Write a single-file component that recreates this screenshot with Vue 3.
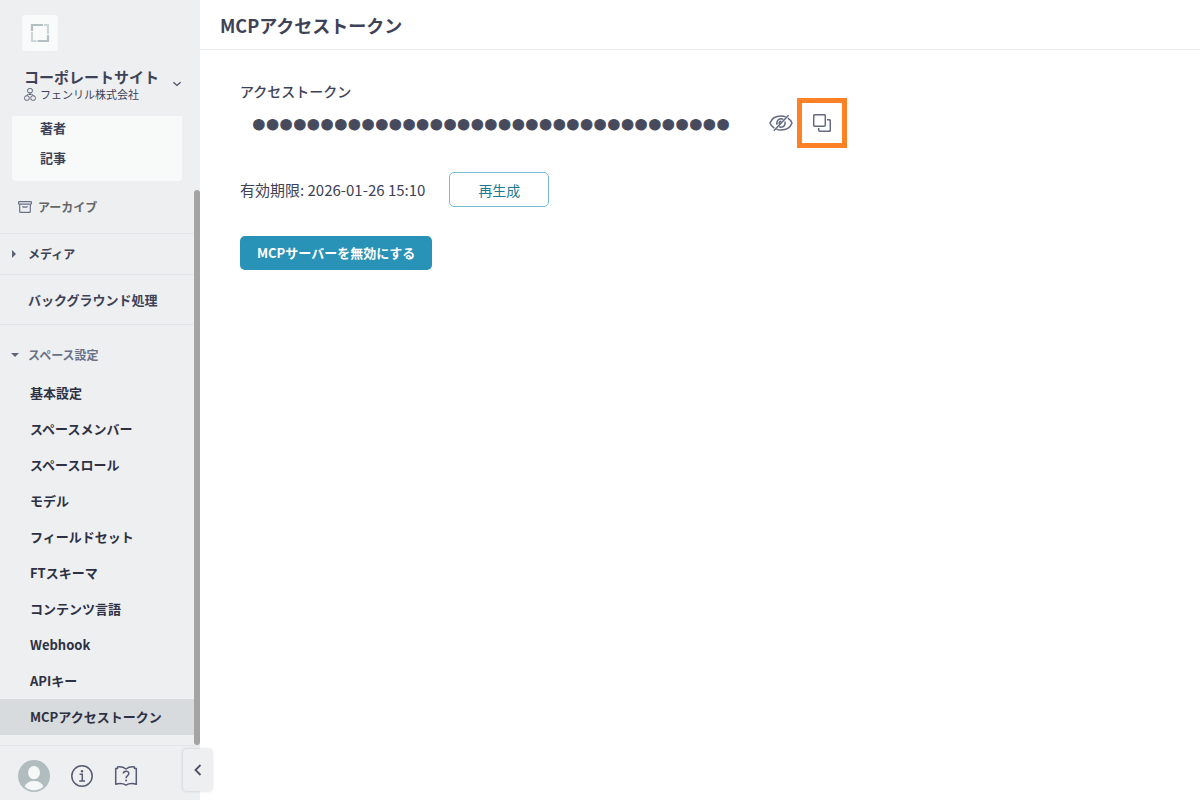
<template>
  <div class="layout">
    <aside class="sidebar">
      <div class="space">
        <a href="#" class="logo" aria-label="ホーム">
          <svg width="20" height="20" viewBox="0 0 20 20" fill="none" stroke-width="2.2">
            <path d="M2 8V2h11M18 12v6H7.5" stroke="#b4bfc2" />
            <path d="M14 2h4v9M2 9v9h4.5" stroke="#cfd6d8" />
          </svg>
        </a>
        <button type="button" class="space-switch">
          <span class="space-text">
            <span class="space-name">コーポレートサイト</span>
            <span class="org">
              <svg width="12" height="13" viewBox="0 0 12 13" fill="none" stroke="#5d6379">
                <rect x="3.6" y="0.6" width="4.8" height="4.2" rx="1.5" />
                <rect x="0.6" y="7.9" width="4.6" height="4.4" rx="1.6" />
                <rect x="6.8" y="7.9" width="4.6" height="4.4" rx="1.6" />
                <path d="M6 4.8v1.6M2.9 7.9q0-1.5 1.5-1.5h3.2q1.5 0 1.5 1.5" />
              </svg>
              フェンリル株式会社
            </span>
          </span>
          <svg width="10" height="6" viewBox="0 0 10 6" fill="none" stroke="#4b5066" stroke-width="1.3">
            <path d="M1.4 1.2 5 4.4l3.6-3.2" />
          </svg>
        </button>
      </div>

      <nav class="nav">
        <div class="models">
          <a v-for="m in models" :key="m" href="#">{{ m }}</a>
        </div>
        <a href="#" class="archive">
          <svg width="14" height="12" viewBox="0 0 14 12" fill="none" stroke="#6a7086" stroke-width="1.2">
            <rect x="0.6" y="0.6" width="12.8" height="2.6" rx="0.6" />
            <path d="M1.7 3.2v7.2q0 1 1 1h8.6q1 0 1-1V3.2M4.8 5v.3q0 .9.9.9h2.6q.9 0 .9-.9V5" />
          </svg>
          アーカイブ
        </a>
        <button type="button" class="row media"><span class="caret right"></span>メディア</button>
        <a href="#" class="row background"><span class="caret"></span>バックグラウンド処理</a>
        <button type="button" class="row group" @click="open = !open">
          <span class="caret" :class="open ? 'down' : 'right'"></span>スペース設定
        </button>
        <ul v-if="open" class="settings">
          <li v-for="item in settings" :key="item">
            <a href="#" :class="{ active: item === current }" @click.prevent="current = item">{{ item }}</a>
          </li>
        </ul>
        <div class="thumb"></div>
      </nav>

      <div class="footer">
        <button type="button" aria-label="アカウント">
          <svg width="32" height="32" viewBox="0 0 32 32">
            <circle cx="16" cy="16" r="16" fill="#b1bcbf" />
            <ellipse cx="16" cy="12.6" rx="6" ry="6.6" fill="#f6f8f8" />
            <path d="M6.6 26.6q2.2-5.6 9.4-5.6t9.4 5.6Q21.5 30.4 16 30.4T6.6 26.6Z" fill="#f6f8f8" />
          </svg>
        </button>
        <button type="button" aria-label="情報">
          <svg width="22" height="22" viewBox="0 0 22 22" fill="none" stroke="#555b73" stroke-width="1.5">
            <circle cx="11" cy="11" r="10.2" />
            <path d="M8.6 9.3h2.7v6.5M8.2 15.9h5.8" />
            <circle cx="11" cy="6.2" r="1.2" fill="#555b73" stroke="none" />
          </svg>
        </button>
        <button type="button" aria-label="ヘルプ">
          <svg width="24" height="22" viewBox="0 0 24 22" fill="none" stroke="#555b73" stroke-width="1.5">
            <path d="M12 4C9.5 1.9 6.5 1.7 3.5 1.9v1.5H1.7v15.8c3.8-1 7.3-.9 10.3.9 3-1.8 6.5-1.900 10.300-.9V3.400h-1.800V1.900C17.500 1.700 14.500 1.900 12 4Z" stroke-linejoin="round" />
            <path d="M9.300 8.600c.1-3.300 5.600-3.300 5.500 0 0 2-2.700 2.100-2.700 4.600" />
            <circle cx="12.1" cy="15.5" r="1" fill="#555b73" stroke="none" />
          </svg>
        </button>
      </div>
      <button type="button" class="collapse" aria-label="サイドバーを閉じる">
        <svg width="8" height="12" viewBox="0 0 8 12" fill="none" stroke="#4b5066" stroke-width="1.8">
          <path d="M6.5 1 1.5 6l5 5" />
        </svg>
      </button>
    </aside>

    <main class="main">
      <header class="header"><h1>MCPアクセストークン</h1></header>
      <section class="content">
        <label for="token">アクセストークン</label>
        <div class="token-row">
          <input id="token" :type="visible ? 'text' : 'password'" :value="token" readonly />
          <button type="button" class="icon-btn" aria-label="表示" @click="visible = !visible">
            <svg width="24" height="18" viewBox="0 0 24 18" fill="none" stroke="#646a80" stroke-width="1.5">
              <path d="M5.3 14.2C3.3 12.9 1.7 11 1 9c1.6-4.3 6-7 11-7 1.7 0 3.2.3 4.6.9M18.8 4.2C20.8 5.4 22.3 7.1 23 9c-1.6 4.3-6 7-11 7-1.7 0-3.2-.3-4.6-.9" />
              <path d="M8.2 10.8C7 7.8 9 4.8 12 4.8q1.2 0 2.2.6M15.9 7.6c1 2.8-1 5.6-3.900 5.600q-1 0-1.900-.5M10.200 9.800q-.4-2.400 2-2.600M4.800 16.800 19.600 1.200" />
            </svg>
          </button>
          <button type="button" class="icon-btn copy" aria-label="コピー">
            <svg width="18" height="18" viewBox="0 0 18 18" fill="none" stroke="#646a80" stroke-width="1.5">
              <rect x="0.7" y="0.7" width="11.6" height="11.6" rx="1.2" />
              <path d="M14 5.7h2.1q1.2 0 1.2 1.2v9.2q0 1.2-1.2 1.2H6.9q-1.2 0-1.2-1.2V14" />
            </svg>
          </button>
        </div>
        <div class="expiry">
          <span>有効期限: 2026-01-26 15:10</span>
          <button type="button" class="outline">再生成</button>
        </div>
        <button type="button" class="primary">MCPサーバーを無効にする</button>
      </section>
    </main>
  </div>
</template>

<script setup>
import { ref } from 'vue'

const open = ref(true)
const visible = ref(false)
const current = ref('MCPアクセストークン')
const token = '4f8a1c0d9b7e4263a5d81f30c6b2e97d04a'

const models = ['著者', '記事']
const settings = [
  '基本設定',
  'スペースメンバー',
  'スペースロール',
  'モデル',
  'フィールドセット',
  'FTスキーマ',
  'コンテンツ言語',
  'Webhook',
  'APIキー',
  'MCPアクセストークン'
]
</script>

<style>
body { margin: 0; background: #fff; }
</style>

<style scoped>
.layout {
  display: flex;
  min-height: 100vh;
  font-family: "Noto Sans CJK JP", sans-serif;
  font-size: 14px;
  line-height: 20px;
  color: #3e4256;
}

a { color: inherit; text-decoration: none; }
button, input { font: inherit; color: inherit; }
button {
  display: flex;
  align-items: center;
  padding: 0;
  border: none;
  background: none;
  cursor: pointer;
}
svg { display: block; flex: none; }

.sidebar {
  position: relative;
  display: flex;
  flex-direction: column;
  flex: none;
  width: 200px;
  background: #edeff1;
}

.space { padding: 15px 18px 15px 24px; }
.logo {
  display: flex;
  align-items: center;
  justify-content: center;
  width: 36px;
  height: 36px;
  margin: 0 0 16px -2px;
  border-radius: 4px;
  background: #f9fafa;
}
.space-switch { justify-content: space-between; width: 100%; text-align: left; }
.space-text { display: flex; flex-direction: column; }
.space-name { font-size: 15px; font-weight: 700; line-height: 20px; }
.org { display: flex; align-items: center; gap: 4px; font-size: 11px; line-height: 14px; }

.nav { position: relative; flex: 1; padding-bottom: 10px; font-size: 13px; font-weight: 700; }
.models {
  display: flex;
  flex-direction: column;
  gap: 6px;
  margin: 0 18px 0 12px;
  padding: 0 28px 11px;
  border-radius: 0 0 4px 4px;
  background: #f8faf9;
  line-height: 24px;
}
.archive {
  display: flex;
  align-items: center;
  gap: 6px;
  height: 52px;
  padding-left: 18px;
  color: #666;
  font-size: 12px;
}
.row {
  display: flex;
  align-items: center;
  width: 194px;
  box-sizing: border-box;
  padding-left: 12px;
  border-top: 1px solid #e1e6e9;
}
.media { height: 41px; font-size: 12px; }
.background { height: 50px; }
.group { height: 51px; padding-top: 10px; color: #6a7086; font-size: 12px; }
.caret { width: 16px; }
.caret::before { content: ""; display: block; width: 0; border: 4px solid transparent; }
.caret.right::before { border-left-color: #5d6379; border-right-width: 0; }
.caret.down::before { margin-left: -1px; border-top-color: #5d6379; border-bottom-width: 0; }

.settings { margin: 0; padding: 0; list-style: none; color: #2e3144; }
.settings a { display: block; width: 194px; box-sizing: border-box; padding-left: 30px; line-height: 36px; }
.settings a.active { background: #d7dbdd; }
.thumb {
  position: absolute;
  top: 74px;
  right: 0;
  bottom: 0;
  width: 6px;
  border-radius: 3px;
  background: #a3a4a3;
}

.footer {
  display: flex;
  align-items: center;
  gap: 21px;
  padding: 14px 18px 8px;
  border-top: 1px solid #e1e6e9;
}
.collapse {
  position: absolute;
  right: -12px;
  bottom: 9px;
  justify-content: center;
  width: 29px;
  height: 42px;
  border-radius: 4px;
  background: #edeff1;
  box-shadow: 0 0 3px rgba(60, 64, 85, 0.25);
}

.main { flex: 1; min-width: 0; }
.header { padding: 11px 20px 9px; border-bottom: 1px solid #ebedef; }
h1 { margin: 0; font-size: 18px; line-height: 29px; font-weight: 700; }
.content { padding: 34px 40px; }
label { display: block; font-weight: 500; line-height: 14px; }
.token-row { display: flex; align-items: center; }
input {
  box-sizing: border-box;
  flex: 0 1 525px;
  min-width: 0;
  height: 50px;
  padding: 4px 12px 0;
  border: none;
  outline: none;
  background: none;
}
input[type="password"] {
  color: #474a5c;
  font-family: "Liberation Sans", sans-serif;
  font-size: 39px;
  -webkit-text-stroke: 1px #474a5c;
}
.icon-btn { justify-content: center; width: 32px; height: 50px; }
.icon-btn.copy { width: 50px; border: 5px solid #ff8126; }
.expiry { display: flex; align-items: center; gap: 24px; margin: 24px 0 29px; font-size: 15px; }
.outline {
  justify-content: center;
  width: 100px;
  height: 35px;
  border: 1px solid #74bcd2;
  border-radius: 5px;
  color: #1c7993;
  font-size: 14px;
}
.primary {
  height: 34px;
  padding: 0 17px;
  border-radius: 5px;
  background: #2892b7;
  color: #fff;
  font-size: 13px;
  font-weight: 700;
}
</style>
